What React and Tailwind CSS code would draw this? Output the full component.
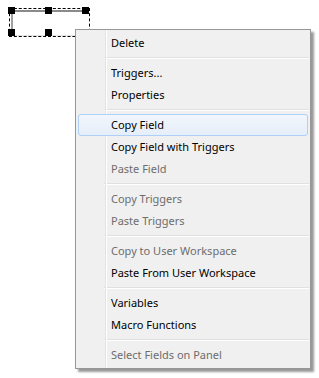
import React from 'react'

const items = [
  { label: 'Delete' },
  { sep: true },
  { label: 'Triggers...' },
  { label: 'Properties' },
  { sep: true },
  { label: 'Copy Field', active: true },
  { label: 'Copy Field with Triggers' },
  { label: 'Paste Field', disabled: true },
  { sep: true },
  { label: 'Copy Triggers', disabled: true },
  { label: 'Paste Triggers', disabled: true },
  { sep: true },
  { label: 'Copy to User Workspace', disabled: true },
  { label: 'Paste From User Workspace' },
  { sep: true },
  { label: 'Variables' },
  { label: 'Macro Functions' },
  { sep: true },
  { label: 'Select Fields on Panel', disabled: true },
]

function Handle({ className }) {
  return <div className={`absolute w-[7px] h-[7px] bg-black ${className}`} />
}

function SelectedField() {
  return (
    <div className="absolute left-[11px] top-[10px] w-[78px] h-[26px]">
      {/* field body */}
      <div className="absolute inset-0 bg-white border-t-2 border-l-2 border-t-[#8a8a8a] border-l-[#a0a0a0] border-b border-b-[#e4e4e4]" />
      {/* dashed selection frame */}
      <div className="absolute left-[-2px] top-[-2px] right-[-1px] bottom-[-1px] border border-dashed border-black" />
      <Handle className="left-[-3px] top-[-3px]" />
      <Handle className="left-[34px] top-[-3px]" />
      <Handle className="left-[71px] top-[-3px]" />
      <Handle className="left-[-3px] top-[19px]" />
      <Handle className="left-[34px] top-[19px]" />
      <Handle className="left-[71px] top-[19px]" />
    </div>
  )
}

function MenuRow({ item }) {
  if (item.sep) {
    return (
      <div className="h-[8px] pl-[28px] pr-[1px] pt-[3px]">
        <div className="h-px bg-[#e0e0e0]" />
        <div className="h-px bg-white" />
      </div>
    )
  }
  return (
    <div
      className={`relative h-[22px] mx-[2px] flex items-center pl-[32px] pb-[2px] rounded-[3px] border ${
        item.active
          ? 'border-[#aecff7] bg-gradient-to-b from-[#f2f6fc] to-[#e6eefa]'
          : 'border-transparent'
      } ${item.disabled ? 'text-[#6d6d6d]' : 'text-black'}`}
    >
      <span className="leading-none">{item.label}</span>
    </div>
  )
}

export default function App() {
  return (
    <div className="relative w-[319px] h-[378px] bg-white overflow-hidden font-['Noto_Sans','Open_Sans',sans-serif] text-[11px]">
      <SelectedField />

      {/* context menu */}
      <div className="absolute left-[75px] top-[29px] w-[236px] flex flex-col border border-[#979797] bg-[#f0f0f0] py-[2px] shadow-[3px_3px_2px_rgba(0,0,0,0.4)]">
        <div className="absolute left-[29px] top-0 bottom-0 w-px bg-[#e2e3e3]" />
        <div className="absolute left-[30px] top-0 bottom-0 w-px bg-white" />
        {items.map((item, i) => (
          <MenuRow key={i} item={item} />
        ))}
      </div>
    </div>
  )
}
